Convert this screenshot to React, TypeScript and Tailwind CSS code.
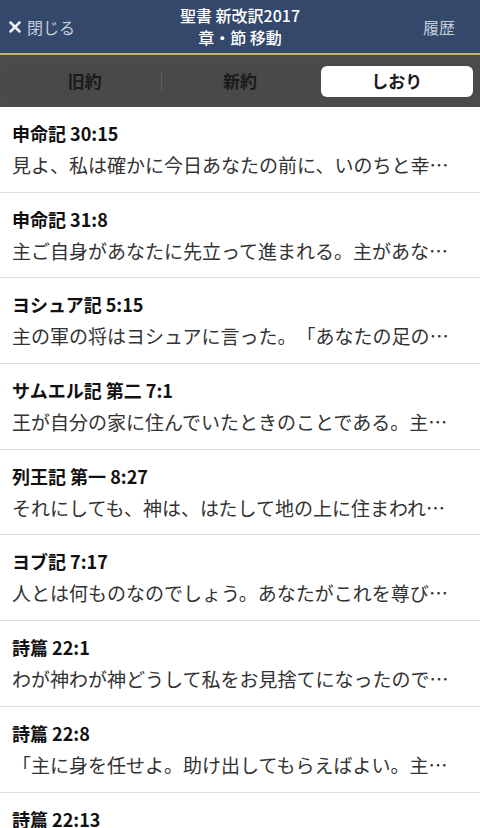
import { X } from "lucide-react";

const bookmarks = [
  { ref: "申命記 30:15", text: "見よ、私は確かに今日あなたの前に、いのちと幸いを、また死とわざわいを置く。" },
  { ref: "申命記 31:8", text: "主ご自身があなたに先立って進まれる。主があなたとともにおられる。" },
  { ref: "ヨシュア記 5:15", text: "主の軍の将はヨシュアに言った。「あなたの足の履き物を脱げ。」" },
  { ref: "サムエル記 第二 7:1", text: "王が自分の家に住んでいたときのことである。主は周囲のすべての敵から彼を守った。" },
  { ref: "列王記 第一 8:27", text: "それにしても、神は、はたして地の上に住まわれるでしょうか。" },
  { ref: "ヨブ記 7:17", text: "人とは何ものなのでしょう。あなたがこれを尊び、心を留められるとは。" },
  { ref: "詩篇 22:1", text: "わが神わが神どうして私をお見捨てになったのですか。" },
  { ref: "詩篇 22:8", text: "「主に身を任せよ。助け出してもらえばよい。主に救い出してもらえ。」" },
  { ref: "詩篇 22:13", text: "彼らは私に向かって口を開きます。かみ裂き、吼えたける獅子のように。" },
];

const tabs = ["旧約", "新約", "しおり"];

export default function App() {
  return (
    <div
      className="w-[480px] h-[828px] overflow-hidden bg-white [text-spacing-trim:space-all]"
      style={{ fontFamily: '"Noto Sans CJK JP", "Noto Sans", sans-serif' }}
    >
      {/* header */}
      <header className="h-[53px] bg-[#34486b] flex items-center px-[6px]">
        <div className="w-[110px] flex items-center gap-[3px] text-[#c5cedc] text-[16px]">
          <X size={18} strokeWidth={3.4} className="text-[#eef1f5]" />
          <span>閉じる</span>
        </div>
        <div className="flex-1 flex flex-col items-center text-white text-[16px] font-medium leading-[22px] pb-[2px]">
          <span>聖書 新改訳2017</span>
          <span>章・節 移動</span>
        </div>
        <div className="w-[110px] flex justify-end pr-[19px] text-[#c5cedc] text-[16px]">履歴</div>
      </header>
      <div className="h-[2px] bg-[#c8b16c]" />

      {/* segmented control */}
      <div className="h-[52px] bg-[#4b4b4b] px-[6px] flex items-center">
        <div className="w-full h-[34px] rounded-[7px] bg-[#494949] grid grid-cols-3 items-center p-px">
          {tabs.map((t, i) => (
            <div key={t} className="relative h-full flex items-center justify-center">
              {i === 0 && <div className="absolute right-0 top-[6px] bottom-[6px] w-px bg-[#5c5c5c]" />}
              <div
                className={`h-[31px] w-full flex items-center justify-center text-[17px] font-bold text-[#1a1a1a] rounded-[6px] ${
                  i === 2 ? "bg-white ml-[3px]" : ""
                }`}
              >
                {t}
              </div>
            </div>
          ))}
        </div>
      </div>

      {/* bookmark list */}
      <ul>
        {bookmarks.map((b) => (
          <li key={b.ref} className="h-[85.7px] border-b border-[#dcdcdc] pl-[12px] pr-[26px] pt-[14px]">
            <div className="text-[18px] font-bold leading-[24px] text-[#111111]">{b.ref}</div>
            <div className="mt-[8px] text-[19px] leading-[24px] text-[#333333] truncate">{b.text}</div>
          </li>
        ))}
      </ul>
    </div>
  );
}
